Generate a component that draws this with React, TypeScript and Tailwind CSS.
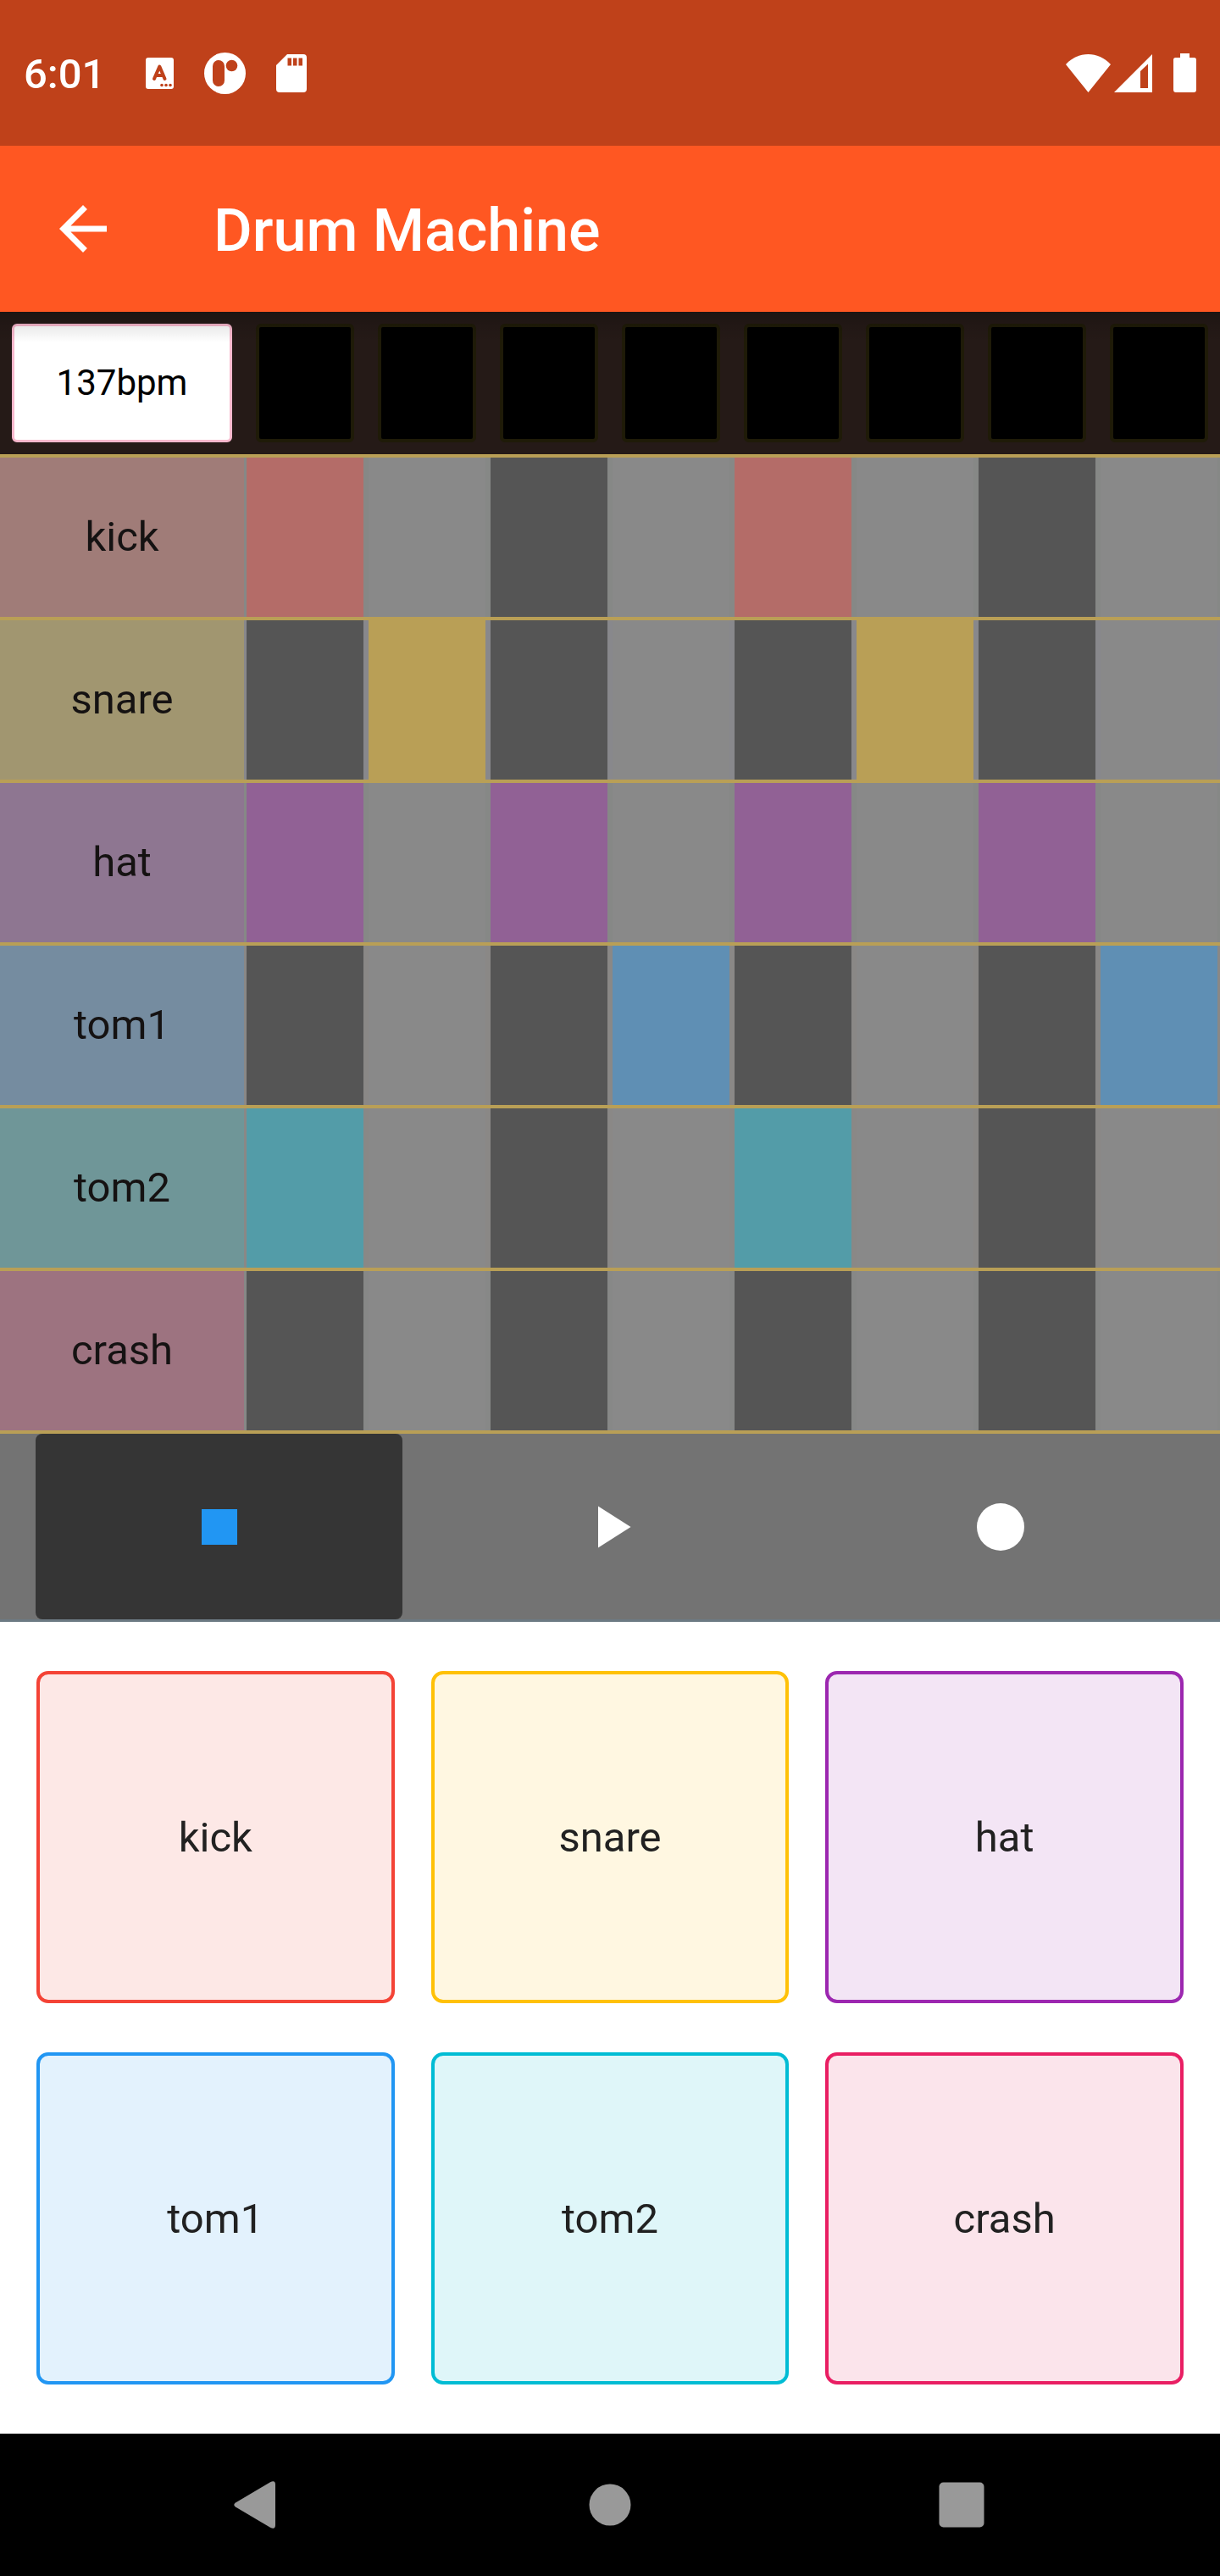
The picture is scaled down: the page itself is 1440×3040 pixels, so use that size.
import type { ReactNode } from "react";

type Track = {
  name: string;
  steps: number[];
  label: string;
  rest: string;
  on: string;
  pad: string;
};

const TRACKS: Track[] = [
  { name: "kick", steps: [0, 4], label: "bg-[#a07c78]", rest: "bg-[#868886]", on: "bg-[#b46c68]", pad: "border-[#f44336] bg-[#fde8e6]" },
  { name: "snare", steps: [1, 5], label: "bg-[#a19670]", rest: "bg-[#88888c]", on: "bg-[#b99f56]", pad: "border-[#ffc107] bg-[#fff7e1]" },
  { name: "hat", steps: [0, 2, 4, 6], label: "bg-[#8e7691]", rest: "bg-[#868886]", on: "bg-[#916195]", pad: "border-[#9c27b0] bg-[#f3e5f5]" },
  { name: "tom1", steps: [3, 7], label: "bg-[#758ca0]", rest: "bg-[#8a8886]", on: "bg-[#5f8fb4]", pad: "border-[#2196f3] bg-[#e3f2fd]" },
  { name: "tom2", steps: [0, 4], label: "bg-[#6f9698]", rest: "bg-[#8a8886]", on: "bg-[#539ca8]", pad: "border-[#00bcd4] bg-[#dff6f9]" },
  { name: "crash", steps: [], label: "bg-[#9d7380]", rest: "bg-[#878887]", on: "bg-[#b4607c]", pad: "border-[#e91e63] bg-[#fbe4eb]" },
];

const STEPS = [0, 1, 2, 3, 4, 5, 6, 7];

function StatusBar() {
  return (
    <div className="flex h-[172px] items-center bg-[#bf411a] pl-7 pr-7 text-white">
      <time className="pt-1 text-[49px] font-medium leading-[58px]">6:01</time>
      <div className="ml-12 flex items-center gap-9">
        <svg className="h-[37px] w-[33px]" viewBox="0 0 33 37" aria-hidden="true">
          <rect width="33" height="37" rx="3" fill="#fff" />
          <path d="M10 25 16.300 10.500 22.500 25M12.500 21h7.500" fill="none" stroke="#bf411a" strokeWidth="4" strokeLinecap="round" strokeLinejoin="round" />
          <circle cx="19" cy="32.500" r="1.800" fill="#bf411a" />
          <circle cx="24" cy="32.500" r="1.800" fill="#bf411a" />
          <circle cx="29" cy="32.500" r="1.800" fill="#bf411a" />
        </svg>
        <svg className="h-[49px] w-[49px]" viewBox="0 0 49 49" aria-hidden="true">
          <circle cx="24.500" cy="24.500" r="24.500" fill="#fff" />
          <rect x="10" y="9" width="14" height="31" rx="7" fill="#bf411a" />
          <circle cx="32.500" cy="15.500" r="6.800" fill="#bf411a" />
        </svg>
        <svg className="h-[45px] w-9" viewBox="0 0 36 45" aria-hidden="true">
          <path d="M13 0H32a4 4 0 0 1 4 4V41a4 4 0 0 1-4 4H4a4 4 0 0 1-4-4V13Z" fill="#fff" />
          <path d="M13.500 4.500h4.500v9h-4.500zM20 4.500h4.500v9H20zM26.500 4.500H31v9h-4.500z" fill="#bf411a" />
        </svg>
      </div>
      <div className="ml-auto flex items-center">
        <svg className="h-[45px] w-[53px]" viewBox="0 0 53 45" aria-hidden="true">
          <path d="M0 12C15-4 38-4 53 12L26.500 45Z" fill="#fff" />
        </svg>
        <svg className="ml-1 h-[45px] w-[45px]" viewBox="0 0 45 45" aria-hidden="true">
          <path fillRule="evenodd" d="M45 0V45H0ZM40 11.500 31 20V40h9Z" fill="#fff" />
        </svg>
        <svg className="ml-[25px] h-[46px] w-[27px]" viewBox="0 0 27 46" aria-hidden="true">
          <path d="M8 0H19V5H24.500A2.500 2.500 0 0 1 27 7.500V43a3 3 0 0 1-3 3H3a3 3 0 0 1-3-3V7.500A2.500 2.500 0 0 1 2.500 5H8Z" fill="#fff" />
        </svg>
      </div>
    </div>
  );
}

function AppBar() {
  return (
    <header className="flex h-[196px] items-center bg-[#ff5722] px-14 text-white">
      <button type="button" aria-label="Back" className="h-[84px] w-[84px]">
        <svg className="h-full w-full" viewBox="0 0 24 24" fill="currentColor" aria-hidden="true">
          <path d="M20 11H7.830l5.590-5.590L12 4l-8 8 8 8 1.410-1.410L7.830 13H20v-2z" />
        </svg>
      </button>
      <h1 className="ml-28 pt-1 text-[70px] font-medium leading-[84px]">Drum Machine</h1>
    </header>
  );
}

function BeatBar() {
  return (
    <div className="relative grid h-[168px] grid-cols-10 bg-[#251a17] py-3.5">
      <div className="col-span-2 px-3.5">
        <button type="button" className="h-full w-full rounded-md border-[3px] border-[#f8b8cd] bg-white text-[42px] leading-[50px] text-black">
          137bpm
        </button>
      </div>
      {STEPS.map((step) => (
        <div key={step} className="px-3.5">
          <div className="h-full rounded-md border-4 border-[#1f1b08] bg-black" />
        </div>
      ))}
      <div className="pointer-events-none absolute inset-x-0 top-0 h-9 bg-linear-to-b from-black/20 via-black/8 to-transparent" />
    </div>
  );
}

function Sequencer() {
  return (
    <div className="border-b-4 border-[#b99f56]">
      {TRACKS.map((track) => (
        <div key={track.name} className="grid h-48 grid-cols-10 border-t-4 border-[#b99f56] bg-[#888888]">
          <div className={`col-span-2 flex items-center justify-center text-[49px] leading-[58px] text-[#151212] ${track.label}`}>
            {track.name}
          </div>
          {STEPS.map((step) => {
            const active = track.steps.includes(step);
            const tone = active ? track.on : step % 2 === 0 ? "bg-[#555555]" : "bg-[#898989]";
            return (
              <div key={step} className={`px-[3px] ${track.rest}`}>
                <button
                  type="button"
                  aria-label={`${track.name} step ${step + 1}`}
                  aria-pressed={active}
                  className={`block h-full w-full ${tone}`}
                />
              </div>
            );
          })}
        </div>
      ))}
    </div>
  );
}

function TransportButton({ label, active, children }: { label: string; active?: boolean; children: ReactNode }) {
  return (
    <button
      type="button"
      aria-label={label}
      className={`flex items-center justify-center rounded-lg ${active ? "bg-[#353535] text-[#2196f3]" : "text-white"}`}
    >
      <svg className="h-[84px] w-[84px]" viewBox="0 0 24 24" fill="currentColor" aria-hidden="true">
        {children}
      </svg>
    </button>
  );
}

function Transport() {
  return (
    <div className="grid h-[222px] grid-cols-3 gap-x-7 border-b-[3px] border-[#6c7a83] bg-[#737373] px-[42px]">
      <TransportButton label="Stop" active>
        <path d="M6 6h12v12H6z" />
      </TransportButton>
      <TransportButton label="Play">
        <path d="M8 5v14l11-7z" />
      </TransportButton>
      <TransportButton label="Record">
        <circle cx="12" cy="12" r="8" />
      </TransportButton>
    </div>
  );
}

function Pads() {
  return (
    <div className="grid grid-cols-3 gap-x-[43px] gap-y-[58px] px-[43px] py-[58px]">
      {TRACKS.map((track) => (
        <button
          key={track.name}
          type="button"
          className={`h-[392px] rounded-[14px] border-4 pt-0.5 text-[49px] leading-[58px] text-[#212121] ${track.pad}`}
        >
          {track.name}
        </button>
      ))}
    </div>
  );
}

function NavigationBar() {
  return (
    <nav className="flex h-[168px] items-center justify-between bg-black pl-[273px] pr-[277px] text-[#999999]">
      <button type="button" aria-label="System back">
        <svg className="h-14 w-14" viewBox="0 0 56 56" fill="currentColor" aria-hidden="true">
          <path d="M5 25.500 46 1.200Q52 -1.500 52 4V52Q52 57.500 46 54.800L5 30.500Q1.500 28 5 25.500Z" />
        </svg>
      </button>
      <button type="button" aria-label="Home">
        <svg className="h-14 w-14" viewBox="0 0 56 56" fill="currentColor" aria-hidden="true">
          <circle cx="30" cy="28" r="24.500" />
        </svg>
      </button>
      <button type="button" aria-label="Recent apps">
        <svg className="h-14 w-14" viewBox="0 0 56 56" fill="currentColor" aria-hidden="true">
          <rect x="1.500" y="1.500" width="53" height="53" rx="5" />
        </svg>
      </button>
    </nav>
  );
}

export default function App() {
  return (
    <div className="bg-white font-[Roboto,sans-serif]">
      <StatusBar />
      <AppBar />
      <main>
        <BeatBar />
        <Sequencer />
        <Transport />
        <Pads />
      </main>
      <NavigationBar />
    </div>
  );
}
